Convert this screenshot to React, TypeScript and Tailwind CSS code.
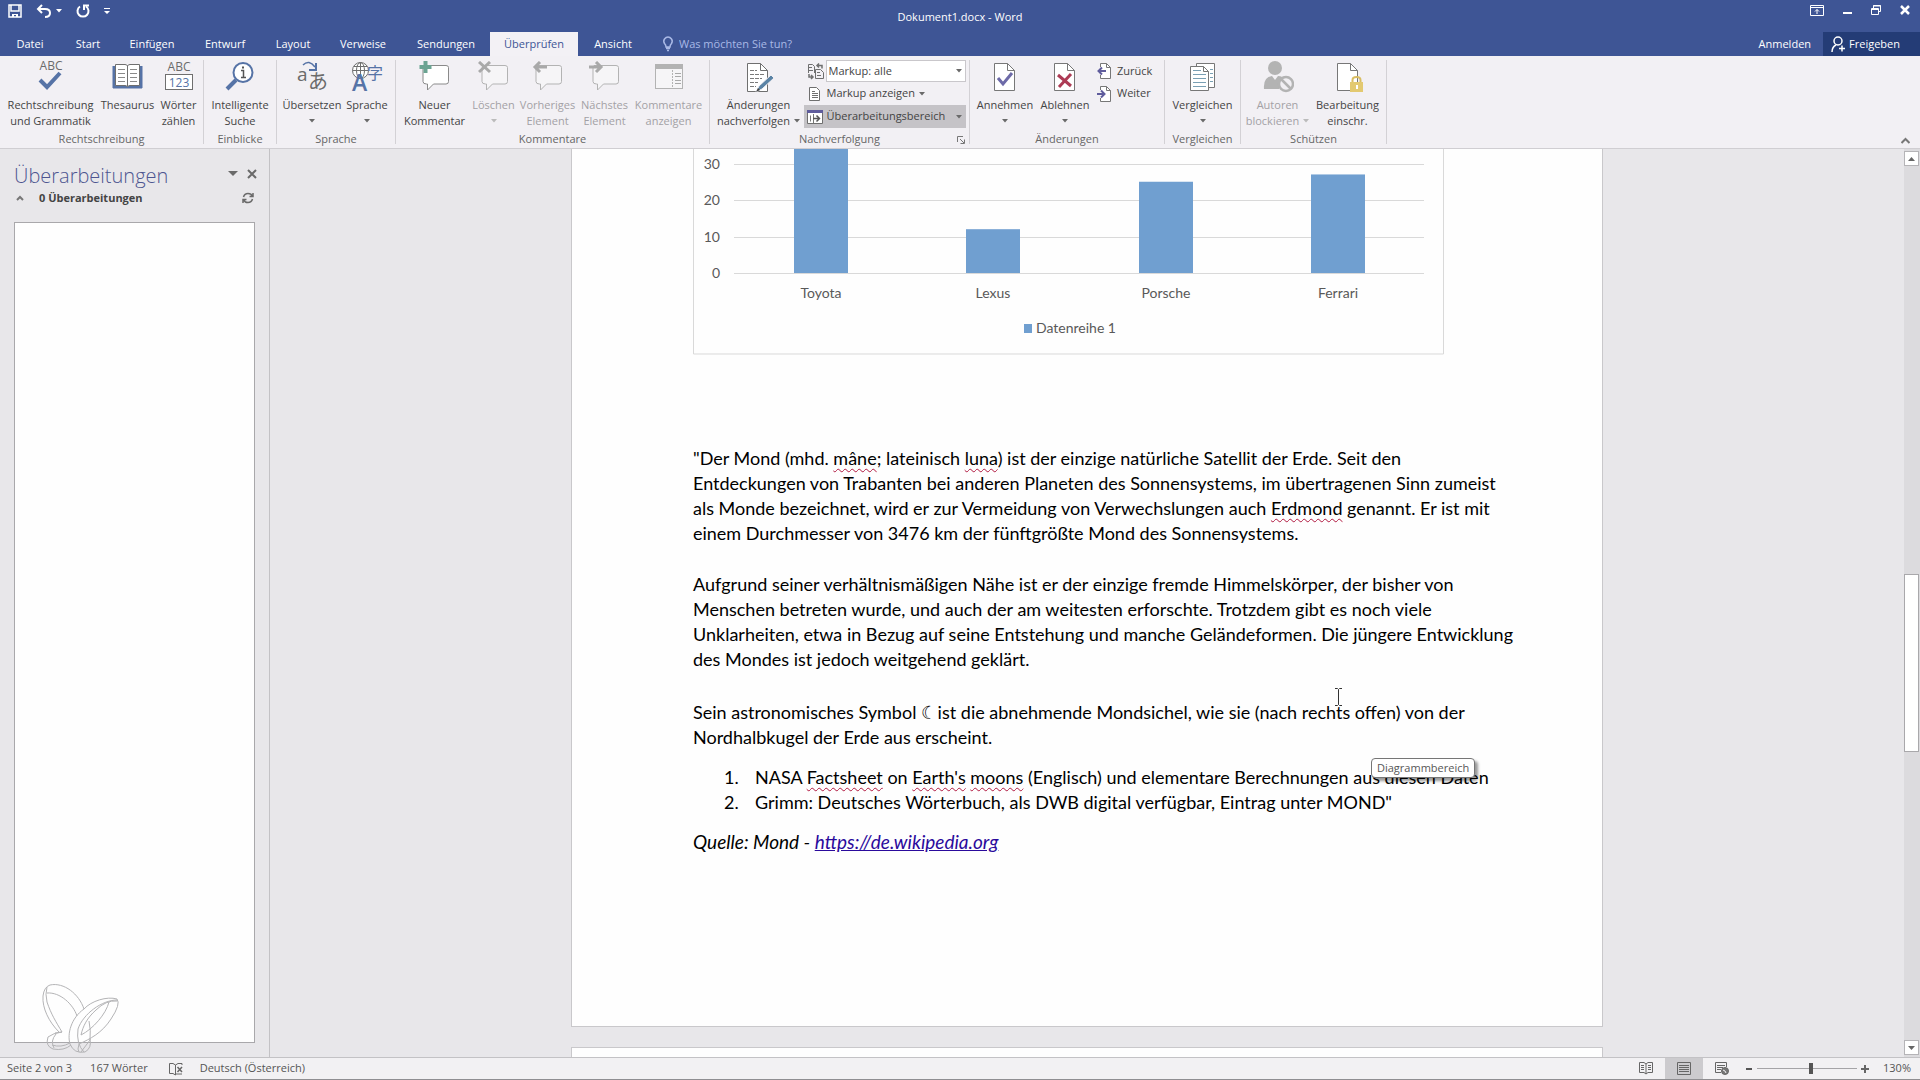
import type { ReactNode } from "react";

const BODY = "font-['Lato',sans-serif]";

function Caret({ className = "text-[#6a6a6a]" }: { className?: string }) {
  return (
    <svg width="6" height="4" viewBox="0 0 6 4" className={`shrink-0 ${className}`} fill="currentColor">
      <path d="M0 0h6L3 3.5z" />
    </svg>
  );
}

/* ---------- ribbon icons ---------- */

function SpellIcon() {
  return (
    <svg width="32" height="32" viewBox="0 0 32 32" className="overflow-visible font-['Open_Sans',sans-serif]">
      <text x="16" y="9" textAnchor="middle" fontSize="12" fill="#6b6b6b">ABC</text>
      <path d="M5 19l7 7L25 12" fill="none" stroke="#5673a6" strokeWidth="4" />
    </svg>
  );
}

function ThesaurusIcon() {
  return (
    <svg width="32" height="32" viewBox="0 0 32 32" fill="none">
      <path d="M1 5v22h29V5" fill="#5673a6" stroke="#5673a6" />
      <path d="M3.5 3.5h9.500q2 0 2.500 1.500q.5-1.500 2.500-1.500h9.500v21h-9.500q-2 0-2.500 1.500q-.5-1.500-2.500-1.500H3.500z" fill="#fff" stroke="#6f6f6f" />
      <path d="M15.500 5v20" stroke="#6f6f6f" />
      <path d="M6 8.500h7M6 12.500h7M6 16.500h7M6 20.500h7M18 8.500h7M18 12.500h7M18 16.500h7M18 20.500h7" stroke="#8a8a8a" />
    </svg>
  );
}

function CountIcon() {
  return (
    <svg width="32" height="32" viewBox="0 0 32 32" className="overflow-visible font-['Open_Sans',sans-serif]">
      <text x="16" y="10" textAnchor="middle" fontSize="12" fill="#6b6b6b">ABC</text>
      <rect x="2.5" y="13.5" width="27" height="15" fill="#fff" stroke="#6f6f6f" />
      <text x="16" y="25.5" textAnchor="middle" fontSize="12" fill="#5673a6">123</text>
    </svg>
  );
}

function LookupIcon() {
  return (
    <svg width="32" height="32" viewBox="0 0 32 32" fill="none">
      <path d="M3 28l9-9" stroke="#5673a6" strokeWidth="4" />
      <circle cx="19" cy="11.5" r="9.5" fill="#fff" stroke="#5673a6" strokeWidth="2" />
      <path d="M17 9.500h2.500v7M17 16.500h5" stroke="#555" strokeWidth="1.5" />
      <path d="M18 5.500h2v2h-2z" fill="#555" />
    </svg>
  );
}

function TranslateIcon() {
  return (
    <svg width="32" height="32" viewBox="0 0 32 32" className="overflow-visible">
      <text x="1" y="20" fontSize="19" fill="#6b6b6b" className="font-['Open_Sans',sans-serif]">a</text>
      <text x="12" y="28" fontSize="20" fill="#6b6b6b" className="font-['Noto_Sans_CJK_JP',sans-serif]">あ</text>
      <path d="M7 4q6-6 12 2" fill="none" stroke="#5673a6" strokeWidth="1.5" />
      <path d="M20 2v7h-7" fill="none" stroke="#5673a6" strokeWidth="2" />
    </svg>
  );
}

function LanguageIcon() {
  return (
    <svg width="32" height="32" viewBox="0 0 32 32" fill="none" className="overflow-visible">
      <circle cx="9.500" cy="9.500" r="8" fill="#fff" stroke="#6f6f6f" />
      <ellipse cx="9.500" cy="9.500" rx="4" ry="8" stroke="#6f6f6f" />
      <path d="M1.5 9.500h16M3 5.500h13M9.500 1.500v16" stroke="#6f6f6f" />
      <text x="16" y="18" fontSize="16" fill="#5673a6" className="font-['Noto_Sans_CJK_JP',sans-serif]">字</text>
      <text x="1" y="30" fontSize="23" fontWeight="600" fill="#5673a6" className="font-['Open_Sans',sans-serif]">A</text>
    </svg>
  );
}

function CommentIcon({ kind }: { kind: "new" | "delete" | "prev" | "next" }) {
  const off = kind !== "new";
  return (
    <svg width="32" height="32" viewBox="0 0 32 32" fill="none">
      <path d="M5 4.500h22q2.500 0 2.500 2v14q0 2.500-2.500 2.500H14.500l-6 6v-6h-1Q4 23 4 20.500V7z" fill={off ? "#f6f5f7" : "#fff"} stroke={off ? "#b3b3b3" : "#8a8a8a"} />
      {kind === "new" && <path d="M6.500 0v12M.5 6h12" stroke="#6ba392" strokeWidth="4" />}
      {kind === "delete" && <path d="M1 1l11 10M12 1L1 11" stroke="#a9a9a9" strokeWidth="3" />}
      {kind === "prev" && <path d="M15 6H3M8 1L3 6l5 5" stroke="#a9a9a9" strokeWidth="3" />}
      {kind === "next" && <path d="M0 6h12M7 1l5 5-5 5" stroke="#a9a9a9" strokeWidth="3" />}
    </svg>
  );
}

function ShowCommentsIcon() {
  return (
    <svg width="32" height="32" viewBox="0 0 32 32" fill="none">
      <rect x="2.5" y="3.5" width="27" height="24" fill="#f6f5f7" stroke="#b3b3b3" />
      <path d="M2 3h28v5H2z" fill="#b3b3b3" />
      <path d="M19.500 9v18" stroke="#b3b3b3" strokeDasharray="2 1" />
      <path d="M22 12.500h6M22 15.500h6M22 19.500h6M22 22.500h6" stroke="#a9a9a9" />
    </svg>
  );
}

function TrackIcon() {
  return (
    <svg width="32" height="32" viewBox="0 0 32 32" fill="none">
      <path d="M4.500 2.500h13l7 7v21h-20z" fill="#fff" stroke="#6f6f6f" />
      <path d="M17.500 2.500v7h7" stroke="#6f6f6f" />
      <path d="M7 9.500h7M7 13.500h14M7 17.500h12M7 21.500h8M7 25.500h6" stroke="#7a7a7a" strokeDasharray="4 1" />
      <path d="M28 14l3 3-12 11-6 3 3-6z" fill="#5b83a5" stroke="#f1eff3" />
      <path d="M13 31l2-4 2 2z" fill="#444" />
    </svg>
  );
}

function PageIcon({ children }: { children?: ReactNode }) {
  return (
    <svg width="32" height="32" viewBox="0 0 32 32" fill="none">
      <path d="M5.500 2.500h13l7 7v20h-20z" fill="#fff" stroke="#777" />
      <path d="M18.500 2.500v7h7" stroke="#777" />
      {children}
    </svg>
  );
}

function CompareIcon() {
  return (
    <svg width="32" height="32" viewBox="0 0 32 32" fill="none">
      <path d="M9.500 2.500h18v24h-18z" fill="#fff" stroke="#777" />
      <path d="M23 8.500h3M23 12.500h3M23 16.500h3M23 20.500h3" stroke="#7aa0b4" />
      <path d="M3.500 5.500h13l5 5v19h-18z" fill="#fff" stroke="#777" />
      <path d="M16.500 5.500v5h5" stroke="#777" />
      <path d="M6 9.500h8M6 13.500h13M6 17.500h13M6 21.500h13M6 25.500h13" stroke="#7aa0b4" />
    </svg>
  );
}

function BlockAuthorsIcon() {
  return (
    <svg width="32" height="32" viewBox="0 0 32 32" fill="none">
      <circle cx="13" cy="7" r="7" fill="#b3b3b3" />
      <path d="M2 28q-1-12 8-13l3 4 3-4q5 0 7 4L17 28z" fill="#b3b3b3" />
      <circle cx="24" cy="23" r="7" fill="#f1eff3" stroke="#b3b3b3" strokeWidth="2.5" />
      <path d="M19 18l10 10" stroke="#b3b3b3" strokeWidth="2.5" />
    </svg>
  );
}

function SmallPageArrow({ dir }: { dir: "left" | "right" }) {
  return (
    <svg width="16" height="16" viewBox="0 0 16 16" fill="none">
      <path d="M3.500 4V.5h6l4 4v11h-10V12" fill="#fff" stroke="#777" />
      <path d="M9.500.5v4h4" stroke="#777" />
      {dir === "left" ? (
        <path d="M9 8H2M5 4.500L1.500 8 5 11.500" stroke="#5f5c9c" strokeWidth="2" />
      ) : (
        <path d="M0 8h7M4 4.500L7.500 8 4 11.500" stroke="#5f5c9c" strokeWidth="2" />
      )}
    </svg>
  );
}

function MarkupIcon() {
  return (
    <svg width="17" height="17" viewBox="0 0 17 17" fill="none" stroke="#6f6f6f" className="shrink-0">
      <path d="M1.500 10V1.500h4l2 2V10M2 4.500h3M2 7.500h4M8.500 6.500h5l3 3v6h-8zM10 9.500h3M10 12.500h4" />
      <path d="M10 2.500h5v3M12 .5l-2 2 2 2M2 11v3h4M4 12l2 2-2 2" strokeWidth="1.5" />
    </svg>
  );
}

function LinesPageIcon() {
  return (
    <svg width="16" height="16" viewBox="0 0 16 16" fill="none" stroke="#6f6f6f">
      <path d="M2.500 1.500h7l3 3v10h-10z" fill="#fff" />
      <path d="M5 5.500h3M5 7.500h6M5 9.500h6M5 11.500h6" />
    </svg>
  );
}

function PaneIcon() {
  return (
    <svg width="16" height="14" viewBox="0 0 16 14" fill="none" className="shrink-0">
      <path d="M.5.5h15v13H.5z" fill="#fff" stroke="#6f6f6f" />
      <path d="M0 0h16v3H0z" fill="#5f5c9c" />
      <path d="M3.500 5.500v6M6.500 4v9" stroke="#777" />
      <path d="M6 8.500h6M9.500 5.500l3 3-3 3" stroke="#555" strokeWidth="1.5" />
    </svg>
  );
}

/* ---------- ribbon parts ---------- */

type BigProps = { icon: ReactNode; lines: string[]; width: string; off?: boolean; caret?: boolean };

function BigButton({ icon, lines, width, off, caret }: BigProps) {
  return (
    <button
      type="button"
      disabled={off}
      className={`flex shrink-0 flex-col items-center whitespace-nowrap pt-px leading-4 ${width} ${off ? "text-[#a3a1a5]" : "text-[#444]"}`}
    >
      <span className="mb-1 block h-8">{icon}</span>
      <span>{lines[0]}</span>
      <span className="flex h-4 items-center gap-1">
        {lines[1]}
        {caret && <Caret className={off ? "text-[#bbb]" : "text-[#6a6a6a]"} />}
      </span>
    </button>
  );
}

function Group({ name, width, children, launcher }: { name: string; width: string; children: ReactNode; launcher?: boolean }) {
  return (
    <section aria-label={name} className={`my-1 flex shrink-0 flex-col justify-between border-r border-[#d3d1d5] ${width}`}>
      <div className="flex justify-center">{children}</div>
      <div className="relative text-center leading-[10px] text-[#666]">
        {name}
        {launcher && (
          <svg width="8" height="8" viewBox="0 0 8 8" fill="none" stroke="#777" className="absolute right-1 top-0.5">
            <path d="M.5 6V.5H6M3 3l4 4M7.500 3.500v4h-4" />
          </svg>
        )}
      </div>
    </section>
  );
}

const TABS = [
  { label: "Datei", width: "w-[60px]" },
  { label: "Start", width: "w-[56px]" },
  { label: "Einfügen", width: "w-[72px]" },
  { label: "Entwurf", width: "w-[74px]" },
  { label: "Layout", width: "w-[62px]" },
  { label: "Verweise", width: "w-[78px]" },
  { label: "Sendungen", width: "w-[88px]" },
  { label: "Überprüfen", width: "w-[88px]", active: true },
  { label: "Ansicht", width: "w-[70px]" },
];

function TitleBar() {
  return (
    <header className="bg-[#3e5595] text-white">
      <div className="flex h-8 items-start">
        <div className="flex flex-1 items-center gap-3.5 pl-2 pt-1">
          <button type="button" aria-label="Speichern">
            <svg width="14" height="14" viewBox="0 0 14 14" fill="none">
              <path d="M1 1h12v12H1zM3 1v6h8V1" stroke="#fff" strokeWidth="1.5" />
              <path d="M4 10h6v3H8v-2H6v2H4z" fill="#fff" />
            </svg>
          </button>
          <button type="button" aria-label="Rückgängig" className="flex items-center gap-1">
            <svg width="16" height="14" viewBox="0 0 16 14" fill="none" stroke="#fff" strokeWidth="2">
              <path d="M6 1L2 5l4 4M2 5h7q5 0 5 4t-5 4" />
            </svg>
            <Caret className="text-white" />
          </button>
          <button type="button" aria-label="Wiederholen">
            <svg width="14" height="14" viewBox="0 0 14 14" fill="none" stroke="#fff" strokeWidth="2">
              <path d="M4 2.500A5.500 5.500 0 1 0 10 2.500M8 6V1.500h5" />
            </svg>
          </button>
          <button type="button" aria-label="Symbolleiste anpassen">
            <svg width="6" height="7" viewBox="0 0 6 7" fill="#fff">
              <path d="M0 0h6v1H0zM0 3h6L3 6z" />
            </svg>
          </button>
        </div>
        <h1 className="pt-[9px] leading-4">Dokument1.docx - Word</h1>
        <div className="flex flex-1 items-center justify-end gap-4 pr-2 pt-1">
          <button type="button" aria-label="Menüband-Anzeigeoptionen">
            <svg width="14" height="11" viewBox="0 0 14 11" fill="none" stroke="#fff">
              <path d="M.5.5h13v10H.5zM1 2.500h12M7 9V4.500M5 6.500l2-2 2 2" />
            </svg>
          </button>
          <button type="button" aria-label="Minimieren">
            <svg width="14" height="12" viewBox="0 0 14 12"><path d="M3 8h9v2H3z" fill="#fff" /></svg>
          </button>
          <button type="button" aria-label="Verkleinern">
            <svg width="12" height="12" viewBox="0 0 12 12" fill="none" stroke="#fff">
              <path d="M3.500 4V1.500h7v6H9M3 2h8M1.500 4.500h7v6h-7zM1 5.500h8" />
            </svg>
          </button>
          <button type="button" aria-label="Schließen">
            <svg width="14" height="12" viewBox="0 0 14 12"><path d="M3 2l8 8M11 2l-8 8" stroke="#fff" strokeWidth="2.5" /></svg>
          </button>
        </div>
      </div>
      <nav className="flex h-6 items-stretch">
        {TABS.map((t) => (
          <button key={t.label} type="button" className={`${t.width} ${t.active ? "bg-[#f3f1f5] text-[#3e5595]" : "text-white"}`}>
            {t.label}
          </button>
        ))}
        <label className="flex flex-1 items-center gap-1 pl-[13px]">
          <svg width="14" height="16" viewBox="0 0 14 16" fill="none" stroke="#a9b9e6" className="shrink-0">
            <path d="M5 11Q5 9 3.500 7.500Q2 5 3.500 3T7 1t3.500 2t0 4.500Q9 9 9 11zM5 12.500h4M6 14.500h2" strokeWidth="1.5" />
          </svg>
          <input placeholder="Was möchten Sie tun?" className="w-40 bg-transparent outline-none placeholder:text-[#a9b9e6]" />
        </label>
        <button type="button" className="px-2">Anmelden</button>
        <button type="button" className="ml-1 flex items-center gap-1 bg-[#243c76] pl-2 pr-5">
          <svg width="14" height="16" viewBox="0 0 14 16" fill="none" stroke="#fff" strokeWidth="1.5">
            <circle cx="7" cy="5" r="4" />
            <path d="M1 16q0-5 4-7M8 12.500h6M11 9.500v6" />
          </svg>
          Freigeben
        </button>
      </nav>
    </header>
  );
}

function Ribbon() {
  return (
    <div className="flex h-[93px] border-b border-[#d0ced2] bg-[#f2f0f4]">
      <Group name="Rechtschreibung" width="w-[204px]">
        <BigButton width="w-[100px]" icon={<SpellIcon />} lines={["Rechtschreibung", "und Grammatik"]} />
        <BigButton width="w-[54px]" icon={<ThesaurusIcon />} lines={["Thesaurus"]} />
        <BigButton width="w-[48px]" icon={<CountIcon />} lines={["Wörter", "zählen"]} />
      </Group>
      <Group name="Einblicke" width="w-[73px]">
        <BigButton width="w-[70px]" icon={<LookupIcon />} lines={["Intelligente", "Suche"]} />
      </Group>
      <Group name="Sprache" width="w-[119px]">
        <BigButton width="w-[62px]" icon={<TranslateIcon />} lines={["Übersetzen"]} caret />
        <BigButton width="w-[48px]" icon={<LanguageIcon />} lines={["Sprache"]} caret />
      </Group>
      <Group name="Kommentare" width="w-[314px]">
        <BigButton width="w-[72px]" icon={<CommentIcon kind="new" />} lines={["Neuer", "Kommentar"]} />
        <BigButton width="w-[46px]" icon={<CommentIcon kind="delete" />} lines={["Löschen"]} caret off />
        <BigButton width="w-[62px]" icon={<CommentIcon kind="prev" />} lines={["Vorheriges", "Element"]} off />
        <BigButton width="w-[52px]" icon={<CommentIcon kind="next" />} lines={["Nächstes", "Element"]} off />
        <BigButton width="w-[76px]" icon={<ShowCommentsIcon />} lines={["Kommentare", "anzeigen"]} off />
      </Group>
      <Group name="Nachverfolgung" width="w-[260px]" launcher>
        <BigButton width="w-[90px]" icon={<TrackIcon />} lines={["Änderungen", "nachverfolgen"]} caret />
        <div className="flex w-[162px] flex-col text-[#444]">
          <div className="flex h-[22px] items-center gap-[2px] pl-[3px]">
            <MarkupIcon />
            <span className="relative flex flex-1 items-center">
              <select aria-label="Markup" className="h-[22px] w-full appearance-none border border-[#c9c7cb] bg-white pl-[2px]">
                <option>Markup: alle</option>
              </select>
              <Caret className="pointer-events-none absolute right-1 text-[#6a6a6a]" />
            </span>
          </div>
          <button type="button" className="flex h-[23px] items-center gap-1 pl-[3px]">
            <LinesPageIcon />
            Markup anzeigen
            <Caret />
          </button>
          <button type="button" className="flex h-[23px] items-center gap-1 bg-[#c5c3c7] pl-[3px] pr-1">
            <PaneIcon />
            <span className="flex-1 text-left">Überarbeitungsbereich</span>
            <Caret />
          </button>
        </div>
      </Group>
      <Group name="Änderungen" width="w-[195px]">
        <BigButton
          width="w-[64px]"
          icon={<PageIcon><path d="M9 17l5 6 9-11" stroke="#6d6aa8" strokeWidth="3" /></PageIcon>}
          lines={["Annehmen"]}
          caret
        />
        <BigButton
          width="w-[56px]"
          icon={<PageIcon><path d="M9 14l13 11M22 13L10 26" stroke="#ad3b55" strokeWidth="3" /></PageIcon>}
          lines={["Ablehnen"]}
          caret
        />
        <div className="flex w-[68px] flex-col pl-1 text-[#444]">
          <button type="button" className="flex h-[22px] items-center gap-1"><SmallPageArrow dir="left" />Zurück</button>
          <button type="button" className="flex h-[23px] items-center gap-1"><SmallPageArrow dir="right" />Weiter</button>
        </div>
      </Group>
      <Group name="Vergleichen" width="w-[76px]">
        <BigButton width="w-[72px]" icon={<CompareIcon />} lines={["Vergleichen"]} caret />
      </Group>
      <Group name="Schützen" width="w-[146px]">
        <BigButton width="w-[68px]" icon={<BlockAuthorsIcon />} lines={["Autoren", "blockieren"]} caret off />
        <BigButton
          width="w-[72px]"
          icon={
            <PageIcon>
              <path d="M20.500 22v-3q0-3 4-3t4 3v3" stroke="#d9bd63" strokeWidth="2" />
              <path d="M18 21h13v10H18z" fill="#e3c970" />
              <path d="M24 24h2v4h-2z" fill="#fff" />
            </PageIcon>
          }
          lines={["Bearbeitung", "einschr."]}
        />
      </Group>
      <div className="flex flex-1 items-end justify-end pb-1 pr-[10px]">
        <button type="button" aria-label="Menüband reduzieren">
          <svg width="9" height="7" viewBox="0 0 9 7" fill="none" stroke="#777" strokeWidth="2"><path d="M.5 6l4-4 4 4" /></svg>
        </button>
      </div>
    </div>
  );
}

/* ---------- left pane ---------- */

function Butterfly() {
  return (
    <svg width="78" height="70" viewBox="0 0 78 70" fill="none" stroke="#b4b4b6" className="absolute -bottom-3 left-[27px]">
      <path d="M17 48C7 38 0 24 1 12Q2 3 8 1C22-2 37 10 42 25M5 9C18 8 31 20 35 32M5 3Q3 10 5 18C9 30 14 38 20 48L13 49" />
      <path d="M20 48Q11 49 6 53Q3 62 11 65Q22 67 29 61M14 50Q8 57 12 64M10 61Q19 64 28 59" />
      <path d="M42 25C49 17 65 12 75 15Q79 20 69 35C60 49 48 55 37 60M75 16C60 16 41 30 36 45Q34 60 42 68M75 17Q64 16 54 26C45 34 41 42 39 51C51 45 64 30 67 18" />
      <path d="M42 25C29 34 25 50 28 60Q32 70 43 68Q50 64 48 55M47 37Q49 46 48 56L39 68M37 60Q35 66 37 68" />
    </svg>
  );
}

function RevisionsPane() {
  return (
    <aside className="flex w-[270px] shrink-0 flex-col border-r border-[#c3c2c5] px-[14px] pb-[14px]">
      <div className="flex items-center pt-3">
        <h2 className="flex-1 text-xl leading-[29px] font-light text-[#4d5590]">Überarbeitungen</h2>
        <button type="button" aria-label="Aufgabenbereichsoptionen" className="-mt-1">
          <svg width="10" height="6" viewBox="0 0 10 6" fill="#6a6a6a"><path d="M0 0h10L5 5z" /></svg>
        </button>
        <button type="button" aria-label="Bereich schließen" className="-mr-[3px] -mt-1 ml-2">
          <svg width="12" height="12" viewBox="0 0 12 12" stroke="#6a6a6a" strokeWidth="2"><path d="M2 2l8 8M10 2l-8 8" /></svg>
        </button>
      </div>
      <div className="flex items-center leading-4 text-[#444]">
        <button type="button" aria-label="Zusammenfassung" className="ml-[2px] mr-[15px]">
          <svg width="8" height="6" viewBox="0 0 8 6" fill="none" stroke="#777" strokeWidth="2"><path d="M1 5l3-3 3 3" /></svg>
        </button>
        <strong className="flex-1 font-bold">0 Überarbeitungen</strong>
        <button type="button" aria-label="Aktualisieren" className="mr-px">
          <svg width="12" height="12" viewBox="0 0 12 12" fill="none" stroke="#6a6a6a" strokeWidth="1.5">
            <path d="M1.500 5Q2.500 1.500 6 1.500T10 4M11 1v3.500H7.500M10.500 7Q9.500 10.500 6 10.500T2 8M1 11V7.500h3.500" />
          </svg>
        </button>
      </div>
      <div className="relative mt-4 flex-1 border border-[#a9a8ab] bg-[#fefefe]">
        <Butterfly />
      </div>
    </aside>
  );
}

/* ---------- document ---------- */

const BARS = [
  { name: "Toyota", value: 40 },
  { name: "Lexus", value: 12 },
  { name: "Porsche", value: 25 },
  { name: "Ferrari", value: 27 },
];

function Chart() {
  const zeroY = 124;
  const unit = 3.65;
  const step = 172.3;
  return (
    <svg width="751" height="206" viewBox="0 0 751 206" className={`block ${BODY}`} fill="#595959" fontSize="14">
      <path d="M.5 0v205h750V0" fill="none" stroke="#d9d9d9" />
      {[0, 10, 20, 30].map((v) => (
        <g key={v}>
          <path d={`M41 ${Math.round(zeroY - v * unit) + 0.5}h690`} stroke="#d9d9d9" />
          <text x="27" y={Math.round(zeroY - v * unit) + 5} textAnchor="end">{v}</text>
        </g>
      ))}
      {BARS.map((b, i) => (
        <g key={b.name}>
          <rect x={Math.round(101 + i * step)} y={zeroY - b.value * unit} width="54" height={b.value * unit} fill="#709fd0" />
          <text x={Math.round(128 + i * step)} y="149" textAnchor="middle">{b.name}</text>
        </g>
      ))}
      <rect x="331" y="175" width="8" height="9" fill="#709fd0" />
      <text x="343" y="184">Datenreihe 1</text>
    </svg>
  );
}

function Typo({ children }: { children: ReactNode }) {
  return (
    <span className="underline decoration-[#b0173f] decoration-wavy decoration-1 underline-offset-[3px]">{children}</span>
  );
}

function Page() {
  return (
    <article className={`relative w-[1032px] shrink-0 border-x border-b border-[#c9c8cb] bg-[#fefefe] pb-[172px] pl-[121px] text-black ${BODY}`}>
      <Chart />
      <div className="whitespace-nowrap pt-[91px] text-[18px] leading-[25px]">
        <p>
          "Der Mond (mhd. <Typo>mâne</Typo>; lateinisch <Typo>luna</Typo>) ist der einzige natürliche Satellit der Erde. Seit den<br />
          Entdeckungen von Trabanten bei anderen Planeten des Sonnensystems, im übertragenen Sinn zumeist<br />
          als Monde bezeichnet, wird er zur Vermeidung von Verwechslungen auch <Typo>Erdmond</Typo> genannt. Er ist mit<br />
          einem Durchmesser von 3476 km der fünftgrößte Mond des Sonnensystems.
        </p>
        <p className="mt-[26px]">
          Aufgrund seiner verhältnismäßigen Nähe ist er der einzige fremde Himmelskörper, der bisher von<br />
          Menschen betreten wurde, und auch der am weitesten erforschte. Trotzdem gibt es noch viele<br />
          Unklarheiten, etwa in Bezug auf seine Entstehung und manche Geländeformen. Die jüngere Entwicklung<br />
          des Mondes ist jedoch weitgehend geklärt.
        </p>
        <p className="mt-7">
          Sein astronomisches Symbol <span className="inline-block w-3">☾</span> ist die abnehmende Mondsichel, wie sie (nach rechts offen) von der<br />
          Nordhalbkugel der Erde aus erscheint.
        </p>
        <ol className="mt-[15px] pl-[31px]">
          <li className="flex">
            <span className="w-[31px]">1.</span>
            <span>NASA <Typo>Factsheet</Typo> on <Typo>Earth's</Typo> <Typo>moons</Typo> (Englisch) und elementare Berechnungen aus diesen Daten</span>
          </li>
          <li className="flex">
            <span className="w-[31px]">2.</span>
            <span>Grimm: Deutsches Wörterbuch, als DWB digital verfügbar, Eintrag unter MOND"</span>
          </li>
        </ol>
        <p className="mt-[14px] text-[19px] italic">
          Quelle: Mond - <a href="https://de.wikipedia.org" className="text-[#2a0a9c] underline">https://de.wikipedia.org</a>
        </p>
      </div>
      {/* text cursor and chart tooltip float over the page */}
      <svg width="9" height="18" viewBox="0 0 9 18" fill="none" stroke="#333" className="absolute left-[762px] top-[539px]">
        <path d="M1 .5h2.500l1 1 1-1H8M4.500 1.500v15M1 17.500h2.500l1-1 1 1H8" />
      </svg>
      <div role="tooltip" className="absolute left-[799px] top-[609px] rounded-sm border border-[#767676] bg-white px-[5px] text-[11px] leading-[18px] text-[#575757] shadow-[3px_3px_3px_rgba(0,0,0,0.4)] font-['Open_Sans',sans-serif]">
        Diagrammbereich
      </div>
    </article>
  );
}

function ScrollBar() {
  return (
    <div className="flex w-4 shrink-0 flex-col bg-[#dcdbde] py-[2px] pr-px">
      <button type="button" aria-label="Nach oben" className="flex h-[15px] items-center justify-center border border-[#b5b4b7] bg-white">
        <svg width="7" height="4" viewBox="0 0 7 4" fill="#666"><path d="M0 4h7L3.500 0z" /></svg>
      </button>
      <div className="flex-[409]" />
      <div className="flex-[177] border border-[#a9a8ab] bg-white" />
      <div className="flex-[289]" />
      <button type="button" aria-label="Nach unten" className="flex h-[15px] items-center justify-center border border-[#b5b4b7] bg-white">
        <svg width="7" height="4" viewBox="0 0 7 4" fill="#666"><path d="M0 0h7L3.500 4z" /></svg>
      </button>
    </div>
  );
}

function StatusBar() {
  return (
    <footer className="flex h-[23px] shrink-0 items-center border-b border-t border-b-[#8f8e91] border-t-[#c3c2c5] bg-[#f2f1f3] text-[#555]">
      <span className="pl-[7px]">Seite 2 von 3</span>
      <span className="pl-[18px]">167 Wörter</span>
      <svg width="16" height="14" viewBox="0 0 16 14" fill="none" stroke="#666" className="ml-[20px] mr-[16px]">
        <path d="M7.500 13L5 11.500H1.500v-10H5l2.500 1.500zM7.500 3L10 1.500h4V3M8 12h6" />
        <path d="M9.500 5l4.500 5M14 5l-4.500 5" strokeWidth="1.5" />
      </svg>
      <span className="flex-1">Deutsch (Österreich)</span>
      <button type="button" aria-label="Lesemodus" className="mr-[12px]">
        <svg width="14" height="13" viewBox="0 0 14 13" fill="none" stroke="#666">
          <path d="M7 12V2L5 .5H.5v10H5L7 12l2-1.500h4.500V.5H9L7 2M2 3.500h3M2 5.500h3M2 7.500h3M9 3.500h3M9 5.500h3M9 7.500h3" />
        </svg>
      </button>
      <button type="button" aria-label="Seitenlayout" className="flex h-full w-[38px] items-center justify-center bg-[#cccbce]">
        <svg width="14" height="13" viewBox="0 0 14 13" fill="none" stroke="#666">
          <path d="M.5.5h13v12H.5zM2 3.500h10M2 5.500h10M2 7.500h10M2 9.500h10" />
        </svg>
      </button>
      <button type="button" aria-label="Weblayout" className="ml-3">
        <svg width="14" height="13" viewBox="0 0 14 13" fill="none" stroke="#666">
          <path d="M6 10.500H.5V.5h11V5M2 3.500h8M2 5.500h6M2 7.500h4" />
          <circle cx="10" cy="9" r="3.5" fill="#777" />
          <path d="M8 8l2 1 1 2" stroke="#f2f1f3" />
        </svg>
      </button>
      <button type="button" aria-label="Verkleinern" className="ml-4">
        <svg width="8" height="8" viewBox="0 0 8 8"><path d="M1 3h6v2H1z" fill="#555" /></svg>
      </button>
      <input
        type="range"
        aria-label="Zoom"
        min="0"
        max="100"
        defaultValue="54"
        className="mx-1 h-3 w-[100px] appearance-none bg-transparent [&::-webkit-slider-runnable-track]:h-px [&::-webkit-slider-runnable-track]:bg-[#a5a4a7] [&::-webkit-slider-thumb]:-mt-[5px] [&::-webkit-slider-thumb]:h-[11px] [&::-webkit-slider-thumb]:w-1 [&::-webkit-slider-thumb]:appearance-none [&::-webkit-slider-thumb]:bg-[#555]"
      />
      <button type="button" aria-label="Vergrößern">
        <svg width="8" height="8" viewBox="0 0 8 8"><path d="M0 3h3V0h2v3h3v2H5v3H3V5H0z" fill="#666" /></svg>
      </button>
      <span className="pl-[14px] pr-[9px]">130%</span>
    </footer>
  );
}

export default function App() {
  return (
    <div className="flex h-screen flex-col overflow-hidden bg-[#e8e7ea] text-[11px] font-['Open_Sans',sans-serif]">
      <TitleBar />
      <Ribbon />
      <div className="flex min-h-0 flex-1">
        <RevisionsPane />
        <main className="flex min-w-0 flex-1 flex-col items-center gap-[20px] overflow-hidden">
          <Page />
          <div className="min-h-0 w-[1032px] flex-1 border-x border-t border-[#c9c8cb] bg-[#fefefe]" />
        </main>
        <ScrollBar />
      </div>
      <StatusBar />
    </div>
  );
}
